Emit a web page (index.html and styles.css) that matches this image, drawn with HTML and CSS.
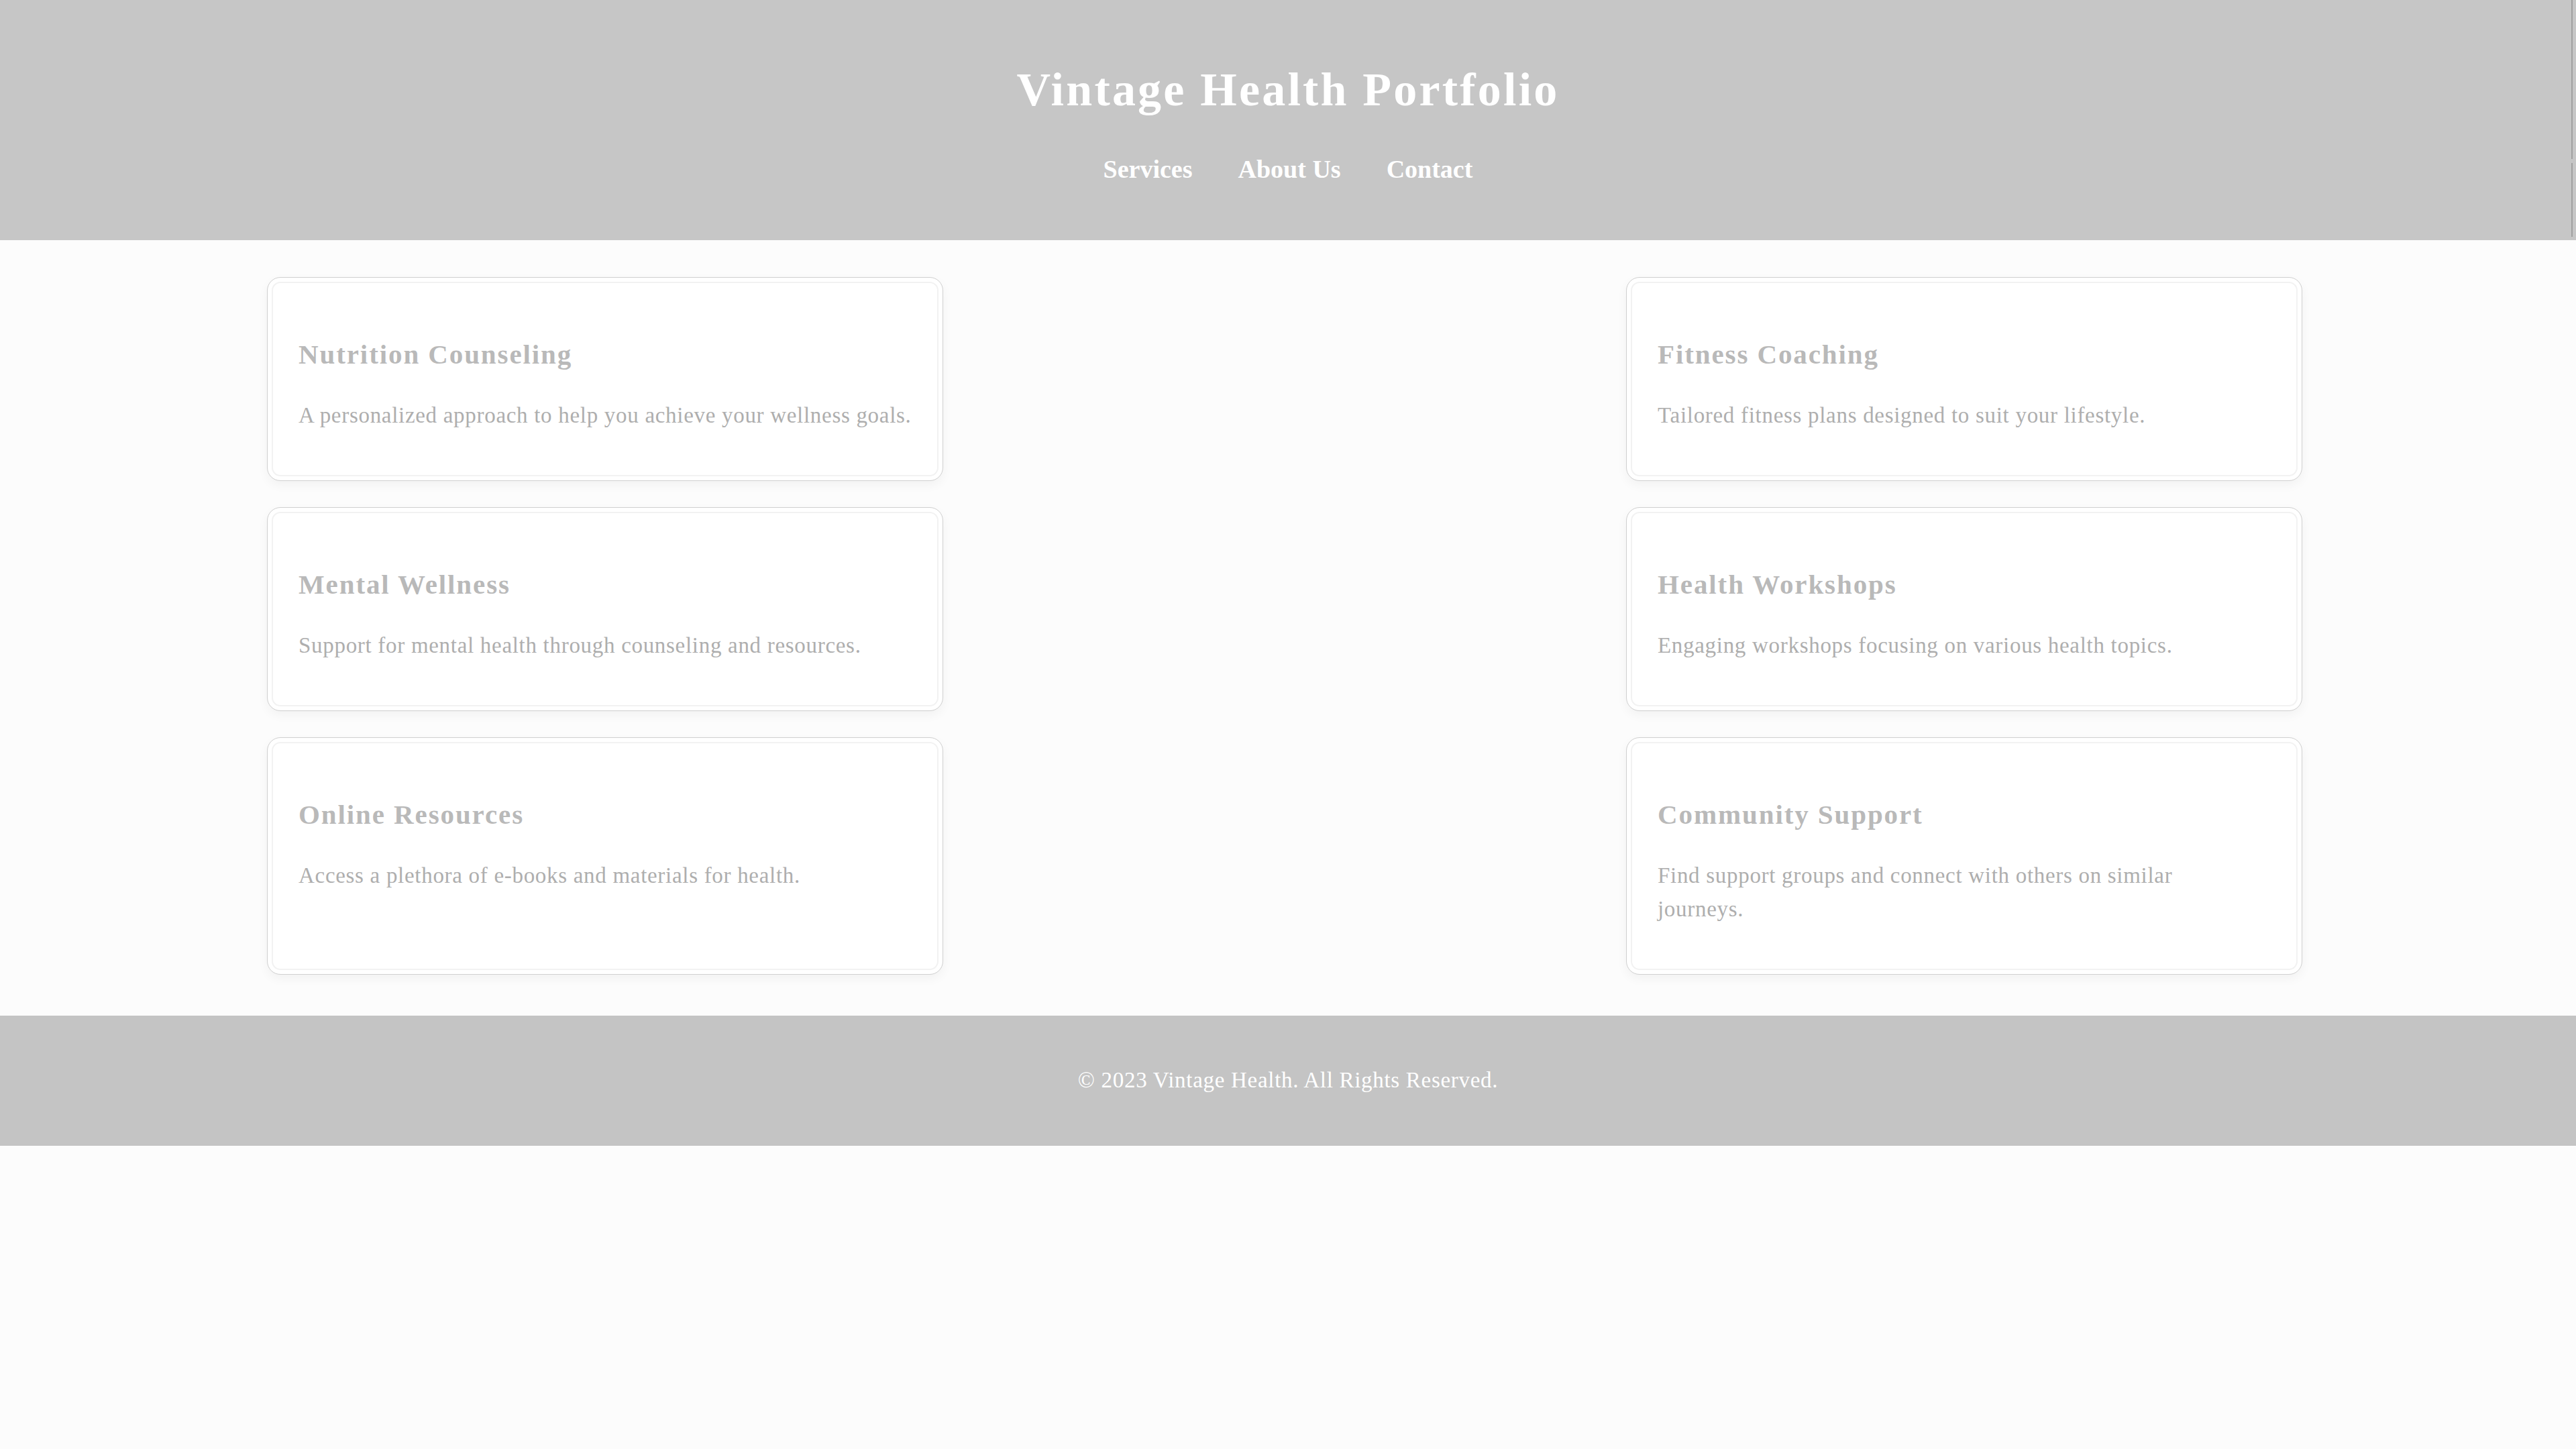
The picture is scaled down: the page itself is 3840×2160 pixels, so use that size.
FILE: index.html
```html
<!DOCTYPE html>
<html lang="en">
<head>
<meta charset="utf-8">
<title>Vintage Health Portfolio</title>
<link rel="stylesheet" href="styles.css">
</head>
<body>
<header class="site-header">
  <h1 class="site-title">Vintage Health Portfolio</h1>
  <nav class="site-nav">
    <a href="#services">Services</a>
    <a href="#about">About Us</a>
    <a href="#contact">Contact</a>
  </nav>
</header>
<main class="content">
  <section class="services" id="services">
    <div class="card">
      <h3>Nutrition Counseling</h3>
      <p>A personalized approach to help you achieve your wellness goals.</p>
    </div>
    <div class="card">
      <h3>Fitness Coaching</h3>
      <p>Tailored fitness plans designed to suit your lifestyle.</p>
    </div>
    <div class="card">
      <h3>Mental Wellness</h3>
      <p>Support for mental health through counseling and resources.</p>
    </div>
    <div class="card">
      <h3>Health Workshops</h3>
      <p>Engaging workshops focusing on various health topics.</p>
    </div>
    <div class="card">
      <h3>Online Resources</h3>
      <p>Access a plethora of e-books and materials for health.</p>
    </div>
    <div class="card">
      <h3>Community Support</h3>
      <p>Find support groups and connect with others on similar<br>journeys.</p>
    </div>
  </section>
</main>
<footer class="site-footer" id="contact">
  <p>© 2023 Vintage Health. All Rights Reserved.</p>
</footer>
</body>
</html>
```

FILE: styles.css
```css
html, body {
  margin: 0;
  padding: 0;
}

body {
  background: #fcfcfc;
  font-family: Georgia, "Liberation Serif", "Times New Roman", serif;
  color: #aeaeae;
}

.site-header {
  position: relative;
  background: #c6c6c6;
  padding: 40px 0 77px;
  text-align: center;
}

.site-header::after {
  content: "";
  position: absolute;
  top: 0;
  right: 5px;
  width: 2px;
  height: 353px;
  background: linear-gradient(#a0a0a0 0 237px, transparent 237px 243px, #a0a0a0 243px);
}

.site-title {
  margin: 44px 0 39px;
  font-size: 70px;
  line-height: 100px;
  letter-spacing: 3.2px;
  font-weight: bold;
  color: #ffffff;
}

.site-nav {
  display: flex;
  justify-content: center;
  gap: 68px;
  font-size: 38px;
  line-height: 58px;
  font-weight: bold;
}

.site-nav a {
  color: #ffffff;
  text-decoration: none;
}

.content {
  padding: 55px 408px 61px 398px;
}

.services {
  display: grid;
  grid-template-columns: 1008px 1008px;
  justify-content: space-between;
  row-gap: 39px;
}

.card {
  background: #ffffff;
  border: 1px solid #d0d0d0;
  border-radius: 20px;
  padding: 40px 42px 40px 46px;
  box-shadow: inset 0 0 0 6px #ffffff, inset 0 0 0 8px #f2f2f2, 0 6px 16px rgba(0, 0, 0, 0.045);
}

.card h3 {
  margin: 46px 0 38px;
  font-size: 41px;
  line-height: 56px;
  letter-spacing: 1.9px;
  font-weight: bold;
  color: #b9b9b9;
}

.card p {
  margin: 0 0 32px;
  font-size: 33px;
  line-height: 50px;
  letter-spacing: 0.7px;
  color: #aeaeae;
}

.site-footer {
  background: #c4c4c4;
  padding: 71px 0 73px;
  text-align: center;
}

.site-footer p {
  margin: 0;
  font-size: 33px;
  line-height: 50px;
  letter-spacing: 0.7px;
  color: #ffffff;
}
```
